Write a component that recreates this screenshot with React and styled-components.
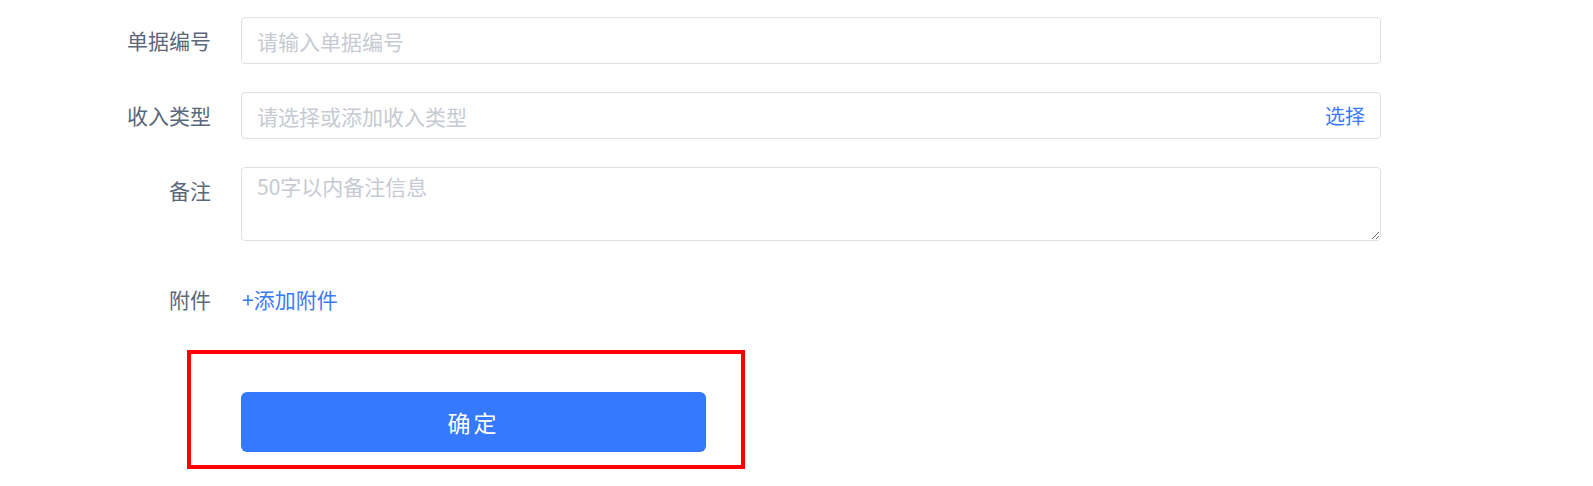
import styled, { createGlobalStyle } from 'styled-components';

const Global = createGlobalStyle`
	html, body {
		margin: 0;
		padding: 0;
		background: #fff;
	}
	body {
		font-family: "Noto Sans CJK SC", "Noto Sans", sans-serif;
	}
	* {
		box-sizing: border-box;
	}
`;

const Form = styled.form`
	display: flex;
	flex-direction: column;
	padding: 17px 0 0 111px;
`;

const Row = styled.div`
	display: flex;
	align-items: flex-start;
	gap: 30px;
	margin-top: ${(p) => p.$gap || 0}px;
`;

const Label = styled.label`
	width: 100px;
	flex: none;
	text-align: right;
	font-size: 21px;
	line-height: 47px;
	color: #5b677a;
`;

const Shell = styled.div`
	width: 1140px;
	height: 47px;
	display: flex;
	align-items: center;
	border: 1px solid #dcdfe6;
	border-radius: 4px;
	background: #fff;
	padding: 0 15px;
`;

const Field = styled.input`
	flex: 1;
	min-width: 0;
	height: 100%;
	border: 0;
	outline: none;
	padding: 0;
	font: inherit;
	font-size: 21px;
	color: #333;
	background: transparent;
	&::placeholder {
		color: #c6cad2;
	}
`;

const Suffix = styled.span`
	font-size: 20px;
	color: #3a7afe;
	cursor: pointer;
`;

const Area = styled.textarea`
	width: 1140px;
	height: 74px;
	border: 1px solid #dcdfe6;
	border-radius: 4px;
	padding: 3px 15px;
	font: inherit;
	font-size: 21px;
	line-height: 1.5;
	color: #333;
	outline: none;
	resize: both;
	&::placeholder {
		color: #c6cad2;
	}
`;

const Link = styled.span`
	font-size: 21px;
	line-height: 47px;
	color: #3a7afe;
	cursor: pointer;
	margin-left: 1px;
`;

const Marked = styled.div`
	width: 558px;
	margin: 27px 0 0 76px;
	border: 4px solid #ff0000;
	padding: 38px 35px 13px 50px;
`;

const Submit = styled.button`
	width: 465px;
	height: 60px;
	border: 0;
	border-radius: 6px;
	background: #3579fe;
	color: #fff;
	font: inherit;
	font-size: 23px;
	letter-spacing: 3px;
	cursor: pointer;
`;

export default function App() {
	return (
		<>
			<Global />
			<Form onSubmit={(e) => e.preventDefault()}>
				<Row>
					<Label>单据编号</Label>
					<Shell>
						<Field placeholder='请输入单据编号' />
					</Shell>
				</Row>
				<Row $gap={28}>
					<Label>收入类型</Label>
					<Shell>
						<Field placeholder='请选择或添加收入类型' readOnly />
						<Suffix>选择</Suffix>
					</Shell>
				</Row>
				<Row $gap={28}>
					<Label>备注</Label>
					<Area placeholder='50字以内备注信息' />
				</Row>
				<Row $gap={35}>
					<Label>附件</Label>
					<Link>+添加附件</Link>
				</Row>
				<Marked>
					<Submit type='submit'>确定</Submit>
				</Marked>
			</Form>
		</>
	);
}
